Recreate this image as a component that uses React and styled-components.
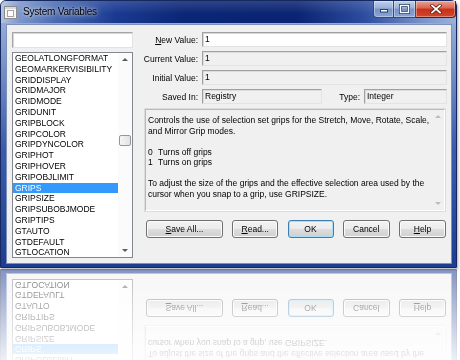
import React from 'react';
import styled, { createGlobalStyle } from 'styled-components';

const GlobalStyle = createGlobalStyle`
  html, body {
    margin: 0;
    padding: 0;
    background: #ffffff;
  }
  body {
    font-family: "Liberation Sans", Arial, sans-serif;
  }
`;

const Stage = styled.div`
  width: 460px;
  height: 360px;
  overflow: hidden;
  background: #ffffff;
`;

const Window = styled.div`
  box-sizing: border-box;
  width: 457px;
  height: 268px;
  display: flex;
  flex-direction: column;
  border: 1px solid #16295f;
  border-radius: 6px 6px 0 0;
  background: linear-gradient(to bottom, #a6b9dc 0%, #7f99cb 20%, #3c5cab 55%, #1d3d93 100%);
  box-shadow: 1px 1px 3px rgba(0, 0, 0, 0.35);
  -webkit-box-reflect: below 1px linear-gradient(to bottom, transparent 0%, transparent 55%, rgba(255, 255, 255, 0.08) 65%, rgba(255, 255, 255, 0.55) 100%);
`;

const TitleBar = styled.div`
  flex: none;
  height: 22px;
  display: flex;
  align-items: flex-start;
  border-radius: 5px 5px 0 0;
  background:
    linear-gradient(to bottom, rgba(255, 255, 255, 0.14), rgba(255, 255, 255, 0) 60%),
    linear-gradient(to right, #b4c4e0 0%, #7d97cc 4%, #4a6bb3 12%, #1a3a92 25%, #0b2676 40%, #0a2372 65%, #2d4d9f 80%, #7690c6 92%, #9db2da 100%);
`;

const TitleIcon = styled.svg`
  flex: none;
  margin: 5px 0 0 3px;
`;

const TitleText = styled.div`
  margin: 5px 0 0 6px;
  font-size: 10px;
  line-height: 12px;
  letter-spacing: -0.2px;
  color: #000;
  text-shadow: 0 0 6px rgba(255, 255, 255, 0.75), 0 0 3px rgba(255, 255, 255, 0.6);
`;

const CaptionGroup = styled.div`
  margin-left: auto;
  display: flex;
  height: 17px;
`;

const CaptionButton = styled.div`
  box-sizing: border-box;
  width: ${({ $w }) => $w}px;
  height: 17px;
  display: flex;
  align-items: center;
  justify-content: center;
  border: 1px solid ${({ $close }) => ($close ? '#5e1a10' : '#34497a')};
  border-top: none;
  border-left-width: ${({ $first }) => ($first ? 1 : 0)}px;
  border-radius: ${({ $first, $close }) => ($first ? '0 0 0 4px' : $close ? '0 0 4px 0' : '0')};
  background: ${({ $close }) =>
    $close
      ? 'linear-gradient(to bottom, #e8a596 0%, #d9634b 45%, #c5301a 50%, #d4462a 100%)'
      : 'linear-gradient(to bottom, #c3d1ea 0%, #98afd8 45%, #7692c8 50%, #89a4d6 100%)'};
  box-shadow: inset 0 0 0 1px rgba(255, 255, 255, 0.35);
`;

const Client = styled.div`
  flex: 1;
  display: flex;
  margin: 1px 4px 3px 5px;
  border: 1px solid #7d90bb;
  background: #f0f0f0;
  min-height: 0;
`;

const LeftColumn = styled.div`
  width: 121px;
  margin-left: 5px;
  padding: 7px 0 5px;
  display: flex;
  flex-direction: column;
  gap: 4px;
`;

const SearchBox = styled.div`
  box-sizing: border-box;
  height: 16px;
  flex: none;
  background: #fff;
  border: 1px solid;
  border-color: #a5a5a5 #e2e2e2 #e2e2e2 #a5a5a5;
  box-shadow: inset 1px 1px 0 #d6d6d6;
`;

const ListBox = styled.div`
  flex: 1;
  display: flex;
  border: 1px solid #828790;
  background: #fff;
  overflow: hidden;
`;

const ListItems = styled.div`
  flex: 1;
  overflow: hidden;
`;

const ListItem = styled.div`
  height: 10.8px;
  line-height: 10.8px;
  padding-left: 2px;
  font-size: 8.5px;
  white-space: nowrap;
  color: ${({ $selected }) => ($selected ? '#fff' : '#000')};
  background: ${({ $selected }) => ($selected ? '#3399ff' : 'transparent')};
`;

const ScrollBar = styled.div`
  flex: none;
  width: ${({ $w }) => $w}px;
  display: flex;
  flex-direction: column;
  align-items: center;
  background: ${({ $bg }) => $bg};
`;

const ArrowCell = styled.div`
  flex: none;
  height: 13px;
  width: 100%;
  display: flex;
  align-items: center;
  justify-content: center;
`;

const Arrow = styled.div`
  width: 0;
  height: 0;
  border-left: 3px solid transparent;
  border-right: 3px solid transparent;
  ${({ $down, $color }) =>
    $down ? `border-top: 3px solid ${$color};` : `border-bottom: 3px solid ${$color};`}
`;

const Track = styled.div`
  flex: 1;
  width: 100%;
  display: flex;
  flex-direction: column;
  align-items: center;
`;

const Thumb = styled.div`
  box-sizing: border-box;
  width: 12px;
  height: 11px;
  margin-top: ${({ $offset }) => $offset}px;
  border: 1px solid #979797;
  border-radius: 2px;
  background: linear-gradient(to right, #f6f6f6, #e2e2e2);
`;

const RightColumn = styled.div`
  flex: 1;
  margin-left: 7px;
  padding: 7px 4px 0 0;
  display: flex;
  flex-direction: column;
`;

const FieldRow = styled.div`
  display: flex;
  align-items: center;
  gap: 4px;
  height: 15px;
  margin-bottom: 4px;
`;

const Label = styled.div`
  flex: none;
  width: ${({ $w }) => $w}px;
  text-align: right;
  font-size: 8.5px;
  color: #000;
  white-space: nowrap;
`;

const Field = styled.div`
  box-sizing: border-box;
  height: 15px;
  ${({ $w }) => ($w ? `width: ${$w}px; flex: none;` : 'flex: 1;')}
  padding-left: 2px;
  font-size: 8.5px;
  line-height: 13px;
  color: #000;
  background: ${({ $editable }) => ($editable ? '#fff' : '#f0f0f0')};
  border: 1px solid;
  border-color: #a0a0a0 #e3e3e3 #e3e3e3 #a0a0a0;
  box-shadow: inset 1px 1px 0 ${({ $editable }) => ($editable ? '#d8d8d8' : '#dcdcdc')};
`;

const Mnemonic = styled.span`
  text-decoration: underline;
  text-underline-offset: 1px;
`;

const Description = styled.div`
  box-sizing: border-box;
  height: 102px;
  margin: 1px 2px 0 5px;
  display: flex;
  border: 1px solid;
  border-color: #b9b9b9 #ffffff #ffffff #b9b9b9;
  box-shadow: 0 0 0 1px #dcdcdc;
  background: #f0f0f0;
`;

const DescText = styled.div`
  flex: 1;
  padding: 5px 0 0 2px;
  display: flex;
  flex-direction: column;
`;

const DescLine = styled.div`
  display: flex;
  height: 10.5px;
  font-size: 8.5px;
  line-height: 10.5px;
  color: #000;
  white-space: nowrap;
`;

const Code = styled.span`
  flex: none;
  width: 10px;
`;

const ButtonRow = styled.div`
  display: flex;
  justify-content: space-between;
  margin: 9px 1px 0 6px;
`;

const Button = styled.button`
  box-sizing: border-box;
  width: ${({ $w }) => $w}px;
  height: 18px;
  padding: 0;
  font-family: "Liberation Sans", Arial, sans-serif;
  font-size: 8.5px;
  color: #000;
  border-radius: 3px;
  border: 1px solid ${({ $default }) => ($default ? '#3c7fb1' : '#707070')};
  box-shadow: inset 0 0 0 1px ${({ $default }) => ($default ? '#a9dcf5' : '#fbfbfb')};
  background: linear-gradient(to bottom, #f3f3f3 0%, #ebebeb 50%, #dddddd 51%, #d0d0d0 100%);
`;

const listItems = [
  'GEOLATLONGFORMAT',
  'GEOMARKERVISIBILITY',
  'GRIDDISPLAY',
  'GRIDMAJOR',
  'GRIDMODE',
  'GRIDUNIT',
  'GRIPBLOCK',
  'GRIPCOLOR',
  'GRIPDYNCOLOR',
  'GRIPHOT',
  'GRIPHOVER',
  'GRIPOBJLIMIT',
  'GRIPS',
  'GRIPSIZE',
  'GRIPSUBOBJMODE',
  'GRIPTIPS',
  'GTAUTO',
  'GTDEFAULT',
  'GTLOCATION',
];

const description = [
  { text: 'Controls the use of selection set grips for the Stretch, Move, Rotate, Scale,' },
  { text: 'and Mirror Grip modes.' },
  { text: '' },
  { code: '0', text: 'Turns off grips' },
  { code: '1', text: 'Turns on grips' },
  { text: '' },
  { text: 'To adjust the size of the grips and the effective selection area used by the' },
  { text: 'cursor when you snap to a grip, use GRIPSIZE.' },
];

const AppIcon = () => (
  <TitleIcon width="13" height="13" viewBox="0 0 13 13">
    <rect x="0.5" y="0.5" width="12" height="12" fill="#f7f7f7" stroke="#8d8d8d" />
    <rect x="1" y="1" width="11" height="2" fill="#d9d9d9" />
    <rect x="3.5" y="4.5" width="6" height="6" fill="#ffffff" stroke="#a3a3a3" />
  </TitleIcon>
);

const MinGlyph = () => (
  <svg width="10" height="8" viewBox="0 0 10 8">
    <rect x="1.5" y="4.5" width="7" height="2.5" fill="#fff" stroke="#2c3f66" strokeWidth="1" />
  </svg>
);

const MaxGlyph = () => (
  <svg width="11" height="10" viewBox="0 0 11 10">
    <rect x="1.5" y="1.5" width="8" height="7" fill="none" stroke="#2c3f66" strokeWidth="3" />
    <rect x="1.5" y="1.5" width="8" height="7" fill="none" stroke="#fff" strokeWidth="1.4" />
  </svg>
);

const CloseGlyph = () => (
  <svg width="12" height="10" viewBox="0 0 12 10">
    <path d="M2 1.5 L10 8.5 M10 1.5 L2 8.5" stroke="#5a1a10" strokeWidth="3.4" strokeLinecap="square" />
    <path d="M2 1.5 L10 8.5 M10 1.5 L2 8.5" stroke="#ffffff" strokeWidth="1.8" strokeLinecap="square" />
  </svg>
);

const App = () => {
  return (
    <Stage>
      <GlobalStyle />
      <Window>
        <TitleBar>
          <AppIcon />
          <TitleText>System Variables</TitleText>
          <CaptionGroup>
            <CaptionButton $w={21} $first>
              <MinGlyph />
            </CaptionButton>
            <CaptionButton $w={22}>
              <MaxGlyph />
            </CaptionButton>
            <CaptionButton $w={40} $close>
              <CloseGlyph />
            </CaptionButton>
          </CaptionGroup>
        </TitleBar>

        <Client>
          <LeftColumn>
            <SearchBox />
            <ListBox>
              <ListItems>
                {listItems.map((name) => (
                  <ListItem key={name} $selected={name === 'GRIPS'}>
                    {name}
                  </ListItem>
                ))}
              </ListItems>
              <ScrollBar $w={14} $bg="#fbfbfb">
                <ArrowCell>
                  <Arrow $color="#5a5a5a" />
                </ArrowCell>
                <Track>
                  <Thumb $offset={69} />
                </Track>
                <ArrowCell>
                  <Arrow $down $color="#5a5a5a" />
                </ArrowCell>
              </ScrollBar>
            </ListBox>
          </LeftColumn>

          <RightColumn>
            <FieldRow>
              <Label $w={58}>
                <Mnemonic>N</Mnemonic>ew Value:
              </Label>
              <Field $editable>1</Field>
            </FieldRow>
            <FieldRow>
              <Label $w={58}>Current Value:</Label>
              <Field>1</Field>
            </FieldRow>
            <FieldRow>
              <Label $w={58}>Initial Value:</Label>
              <Field>1</Field>
            </FieldRow>
            <FieldRow>
              <Label $w={58}>Saved In:</Label>
              <Field $w={120}>Registry</Field>
              <Label $w={34}>Type:</Label>
              <Field>Integer</Field>
            </FieldRow>

            <Description>
              <DescText>
                {description.map((line, i) => (
                  <DescLine key={i}>
                    {line.code && <Code>{line.code}</Code>}
                    {line.text}
                  </DescLine>
                ))}
              </DescText>
              <ScrollBar $w={12} $bg="transparent">
                <ArrowCell>
                  <Arrow $color="#bdbdbd" />
                </ArrowCell>
                <Track />
                <ArrowCell>
                  <Arrow $down $color="#bdbdbd" />
                </ArrowCell>
              </ScrollBar>
            </Description>

            <ButtonRow>
              <Button $w={77}>
                <Mnemonic>S</Mnemonic>ave All...
              </Button>
              <Button $w={46}>
                <Mnemonic>R</Mnemonic>ead...
              </Button>
              <Button $w={46} $default>
                OK
              </Button>
              <Button $w={47}>Cancel</Button>
              <Button $w={47}>
                <Mnemonic>H</Mnemonic>elp
              </Button>
            </ButtonRow>
          </RightColumn>
        </Client>
      </Window>
    </Stage>
  );
};

export default App;
